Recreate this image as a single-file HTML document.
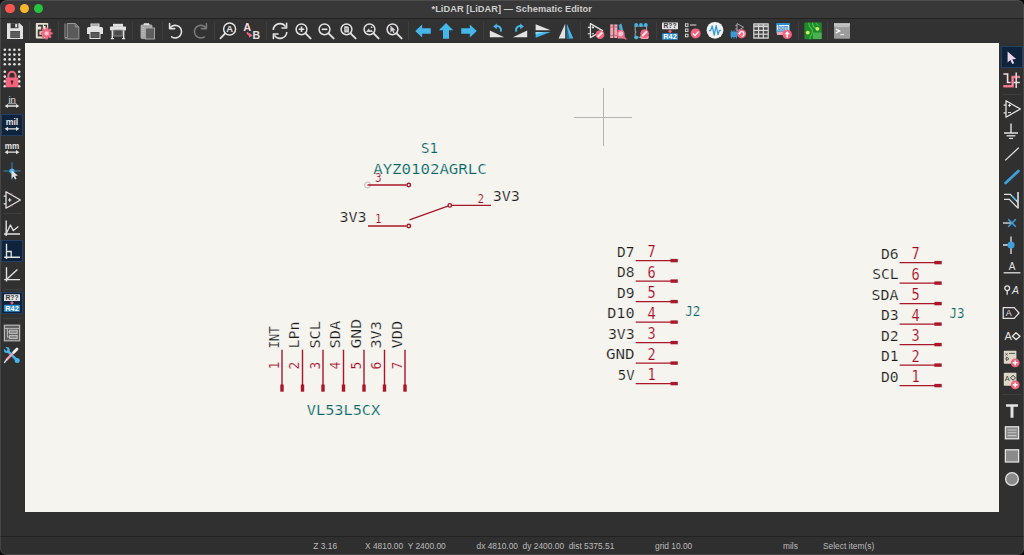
<!DOCTYPE html>
<html lang="en"><head><meta charset="utf-8"><title>*LiDAR [LiDAR] — Schematic Editor</title>
<style>
html,body{margin:0;padding:0;}
body{width:1024px;height:555px;overflow:hidden;background:#0c0c0c;position:relative;font-family:"Liberation Sans",sans-serif;}
#title{position:absolute;left:0;top:0;width:1024px;height:18px;background:#383838;}
#title .t{position:absolute;left:0;width:1023.5px;top:2.7px;text-align:center;font-size:9.25px;font-weight:bold;color:#cfcfcf;line-height:12px;letter-spacing:0.05px;white-space:nowrap}
.tl{position:absolute;top:4px;width:9.4px;height:9.4px;border-radius:50%;}
#tsep{position:absolute;left:0;top:17.8px;width:1024px;height:1.4px;background:#222;}
#tb{position:absolute;left:0;top:19px;width:1024px;height:24px;background:#323232;}
#lt{position:absolute;left:0;top:43px;width:25px;height:469px;background:#303030;}
#rt{position:absolute;left:999px;top:43px;width:25px;height:469px;background:#303030;}
#canvas{position:absolute;left:25px;top:43px;width:974px;height:469px;background:#f5f4ef;overflow:hidden}
#canvas svg{position:absolute;left:-25px;top:-43px;font-family:"DejaVu Sans Mono", "Liberation Mono", monospace;}
#below{position:absolute;left:0;top:512px;width:1024px;height:24px;background:#303030;}
#ssep{position:absolute;left:0;top:536px;width:1024px;height:1px;background:#222;}
#status{position:absolute;left:0;top:537px;width:1024px;height:18px;background:#2f2f2f;color:#bcbcbc;font-size:8.4px;line-height:10px;}
#status span{position:absolute;top:4px;white-space:pre}
.ic{position:absolute;overflow:visible}
.sel{position:absolute;width:22px;height:22px;background:#10233c;box-shadow:inset 0 0 0 1px #233f63;}
.sep{position:absolute;background:#3e3e3e;}
#win{position:absolute;left:0;top:0;width:1024px;height:555px;background:#303030;border-radius:6.5px;overflow:hidden;}
#edge{position:absolute;left:0;top:0;width:1024px;height:555px;border-radius:6.5px;box-shadow:inset 0 0 0 1px rgba(255,255,255,0.10);}
</style></head><body>
<div id="win">
<div id="title">
<div class="tl" style="left:5.3px;background:#f9564f"></div>
<div class="tl" style="left:19.5px;background:#f6b72a"></div>
<div class="tl" style="left:33.9px;background:#27c33c"></div>
<div class="t">*LiDAR [LiDAR] — Schematic Editor</div>
</div>
<div id="tsep"></div>
<div id="tb"></div>
<div id="lt"></div>
<div id="rt"></div>
<div id="canvas">
<svg width="1024" height="555" viewBox="0 0 1024 555">
<path d="M574 117.5H632M603.5 88V146" stroke="#b4b4b4" stroke-width="1" fill="none"/>
<text x="421" y="153" font-size="14.5" fill="#006464" text-anchor="start" textLength="17" lengthAdjust="spacingAndGlyphs" stroke="#f5f4ef" stroke-width="0.2">S1</text>
<text x="373.2" y="173.5" font-size="14.5" fill="#006464" text-anchor="start" textLength="113.5" lengthAdjust="spacingAndGlyphs" stroke="#f5f4ef" stroke-width="0.2">AYZ0102AGRLC</text>
<circle cx="367.5" cy="185" r="3" fill="none" stroke="#bdbdbd" stroke-width="1"/>
<path d="M367.5 185H406.5M368 226H406.5M452 205.4H491M409.5 219.8L447.8 206.2" stroke="#a8172a" stroke-width="1.4" fill="none"/>
<circle cx="408.8" cy="185" r="1.75" fill="none" stroke="#a8172a" stroke-width="1.4"/>
<circle cx="408.8" cy="226" r="1.75" fill="none" stroke="#a8172a" stroke-width="1.4"/>
<circle cx="449.8" cy="205.4" r="1.75" fill="none" stroke="#a8172a" stroke-width="1.4"/>
<text x="375" y="181.5" font-size="11.8" fill="#a4001a" text-anchor="start" textLength="6.6" lengthAdjust="spacingAndGlyphs" stroke="#f5f4ef" stroke-width="0.2">3</text>
<text x="375" y="222.8" font-size="11.8" fill="#a4001a" text-anchor="start" textLength="6.6" lengthAdjust="spacingAndGlyphs" stroke="#f5f4ef" stroke-width="0.2">1</text>
<text x="477.6" y="202.8" font-size="11.8" fill="#a4001a" text-anchor="start" textLength="6.6" lengthAdjust="spacingAndGlyphs" stroke="#f5f4ef" stroke-width="0.2">2</text>
<text x="339.6" y="222" font-size="14.5" fill="#181818" text-anchor="start" textLength="27" lengthAdjust="spacingAndGlyphs" stroke="#f5f4ef" stroke-width="0.2">3V3</text>
<text x="492.8" y="201" font-size="14.5" fill="#181818" text-anchor="start" textLength="27" lengthAdjust="spacingAndGlyphs" stroke="#f5f4ef" stroke-width="0.2">3V3</text>
<path d="M282 349.7V385" stroke="#a8172a" stroke-width="1.4"/>
<rect x="280.3" y="384.5" width="3.4" height="7.2" fill="#a8172a"/>
<text x="278.7" y="348.6" font-size="14.5" fill="#181818" text-anchor="start" textLength="22.3" lengthAdjust="spacingAndGlyphs" transform="rotate(-90 278.7 348.6)" stroke="#f5f4ef" stroke-width="0.2">INT</text>
<text x="279" y="369.6" font-size="14.5" fill="#a4001a" text-anchor="start" textLength="7.8" lengthAdjust="spacingAndGlyphs" transform="rotate(-90 279 369.6)" stroke="#f5f4ef" stroke-width="0.2">1</text>
<path d="M302.5 349.7V385" stroke="#a8172a" stroke-width="1.4"/>
<rect x="300.8" y="384.5" width="3.4" height="7.2" fill="#a8172a"/>
<text x="299.2" y="348.6" font-size="14.5" fill="#181818" text-anchor="start" textLength="27" lengthAdjust="spacingAndGlyphs" transform="rotate(-90 299.2 348.6)" stroke="#f5f4ef" stroke-width="0.2">LPn</text>
<text x="299.5" y="369.6" font-size="14.5" fill="#a4001a" text-anchor="start" textLength="7.8" lengthAdjust="spacingAndGlyphs" transform="rotate(-90 299.5 369.6)" stroke="#f5f4ef" stroke-width="0.2">2</text>
<path d="M323 349.7V385" stroke="#a8172a" stroke-width="1.4"/>
<rect x="321.3" y="384.5" width="3.4" height="7.2" fill="#a8172a"/>
<text x="319.7" y="348.6" font-size="14.5" fill="#181818" text-anchor="start" textLength="27.5" lengthAdjust="spacingAndGlyphs" transform="rotate(-90 319.7 348.6)" stroke="#f5f4ef" stroke-width="0.2">SCL</text>
<text x="320" y="369.6" font-size="14.5" fill="#a4001a" text-anchor="start" textLength="7.8" lengthAdjust="spacingAndGlyphs" transform="rotate(-90 320 369.6)" stroke="#f5f4ef" stroke-width="0.2">3</text>
<path d="M343.5 349.7V385" stroke="#a8172a" stroke-width="1.4"/>
<rect x="341.8" y="384.5" width="3.4" height="7.2" fill="#a8172a"/>
<text x="340.2" y="348.6" font-size="14.5" fill="#181818" text-anchor="start" textLength="28" lengthAdjust="spacingAndGlyphs" transform="rotate(-90 340.2 348.6)" stroke="#f5f4ef" stroke-width="0.2">SDA</text>
<text x="340.5" y="369.6" font-size="14.5" fill="#a4001a" text-anchor="start" textLength="7.8" lengthAdjust="spacingAndGlyphs" transform="rotate(-90 340.5 369.6)" stroke="#f5f4ef" stroke-width="0.2">4</text>
<path d="M364 349.7V385" stroke="#a8172a" stroke-width="1.4"/>
<rect x="362.3" y="384.5" width="3.4" height="7.2" fill="#a8172a"/>
<text x="360.7" y="348.6" font-size="14.5" fill="#181818" text-anchor="start" textLength="29.7" lengthAdjust="spacingAndGlyphs" transform="rotate(-90 360.7 348.6)" stroke="#f5f4ef" stroke-width="0.2">GND</text>
<text x="361" y="369.6" font-size="14.5" fill="#a4001a" text-anchor="start" textLength="7.8" lengthAdjust="spacingAndGlyphs" transform="rotate(-90 361 369.6)" stroke="#f5f4ef" stroke-width="0.2">5</text>
<path d="M384.5 349.7V385" stroke="#a8172a" stroke-width="1.4"/>
<rect x="382.8" y="384.5" width="3.4" height="7.2" fill="#a8172a"/>
<text x="381.2" y="348.6" font-size="14.5" fill="#181818" text-anchor="start" textLength="27.6" lengthAdjust="spacingAndGlyphs" transform="rotate(-90 381.2 348.6)" stroke="#f5f4ef" stroke-width="0.2">3V3</text>
<text x="381.5" y="369.6" font-size="14.5" fill="#a4001a" text-anchor="start" textLength="7.8" lengthAdjust="spacingAndGlyphs" transform="rotate(-90 381.5 369.6)" stroke="#f5f4ef" stroke-width="0.2">6</text>
<path d="M405 349.7V385" stroke="#a8172a" stroke-width="1.4"/>
<rect x="403.3" y="384.5" width="3.4" height="7.2" fill="#a8172a"/>
<text x="401.7" y="348.6" font-size="14.5" fill="#181818" text-anchor="start" textLength="28" lengthAdjust="spacingAndGlyphs" transform="rotate(-90 401.7 348.6)" stroke="#f5f4ef" stroke-width="0.2">VDD</text>
<text x="402" y="369.6" font-size="14.5" fill="#a4001a" text-anchor="start" textLength="7.8" lengthAdjust="spacingAndGlyphs" transform="rotate(-90 402 369.6)" stroke="#f5f4ef" stroke-width="0.2">7</text>
<text x="306.8" y="414.8" font-size="14.5" fill="#006464" text-anchor="start" textLength="73.4" lengthAdjust="spacingAndGlyphs" stroke="#f5f4ef" stroke-width="0.2">VL53L5CX</text>
<path d="M635.7 260.6H671" stroke="#a8172a" stroke-width="1.4"/>
<rect x="670.5" y="258.9" width="7.3" height="3.4" fill="#a8172a"/>
<text x="617.1" y="256.8" font-size="14.5" fill="#181818" text-anchor="start" textLength="17.5" lengthAdjust="spacingAndGlyphs" stroke="#f5f4ef" stroke-width="0.2">D7</text>
<text x="647.6" y="257.2" font-size="15.2" fill="#a4001a" text-anchor="start" textLength="8.2" lengthAdjust="spacingAndGlyphs" stroke="#f5f4ef" stroke-width="0.2">7</text>
<path d="M635.7 281.1H671" stroke="#a8172a" stroke-width="1.4"/>
<rect x="670.5" y="279.4" width="7.3" height="3.4" fill="#a8172a"/>
<text x="617.1" y="277.3" font-size="14.5" fill="#181818" text-anchor="start" textLength="17.5" lengthAdjust="spacingAndGlyphs" stroke="#f5f4ef" stroke-width="0.2">D8</text>
<text x="647.6" y="277.7" font-size="15.2" fill="#a4001a" text-anchor="start" textLength="8.2" lengthAdjust="spacingAndGlyphs" stroke="#f5f4ef" stroke-width="0.2">6</text>
<path d="M635.7 301.6H671" stroke="#a8172a" stroke-width="1.4"/>
<rect x="670.5" y="299.9" width="7.3" height="3.4" fill="#a8172a"/>
<text x="617.1" y="297.8" font-size="14.5" fill="#181818" text-anchor="start" textLength="17.5" lengthAdjust="spacingAndGlyphs" stroke="#f5f4ef" stroke-width="0.2">D9</text>
<text x="647.6" y="298.2" font-size="15.2" fill="#a4001a" text-anchor="start" textLength="8.2" lengthAdjust="spacingAndGlyphs" stroke="#f5f4ef" stroke-width="0.2">5</text>
<path d="M635.7 322.1H671" stroke="#a8172a" stroke-width="1.4"/>
<rect x="670.5" y="320.4" width="7.3" height="3.4" fill="#a8172a"/>
<text x="607.2" y="318.3" font-size="14.5" fill="#181818" text-anchor="start" textLength="27.4" lengthAdjust="spacingAndGlyphs" stroke="#f5f4ef" stroke-width="0.2">D10</text>
<text x="647.6" y="318.7" font-size="15.2" fill="#a4001a" text-anchor="start" textLength="8.2" lengthAdjust="spacingAndGlyphs" stroke="#f5f4ef" stroke-width="0.2">4</text>
<path d="M635.7 342.6H671" stroke="#a8172a" stroke-width="1.4"/>
<rect x="670.5" y="340.9" width="7.3" height="3.4" fill="#a8172a"/>
<text x="607.9" y="338.8" font-size="14.5" fill="#181818" text-anchor="start" textLength="26.7" lengthAdjust="spacingAndGlyphs" stroke="#f5f4ef" stroke-width="0.2">3V3</text>
<text x="647.6" y="339.2" font-size="15.2" fill="#a4001a" text-anchor="start" textLength="8.2" lengthAdjust="spacingAndGlyphs" stroke="#f5f4ef" stroke-width="0.2">3</text>
<path d="M635.7 363.1H671" stroke="#a8172a" stroke-width="1.4"/>
<rect x="670.5" y="361.4" width="7.3" height="3.4" fill="#a8172a"/>
<text x="605.9" y="359.3" font-size="14.5" fill="#181818" text-anchor="start" textLength="28.7" lengthAdjust="spacingAndGlyphs" stroke="#f5f4ef" stroke-width="0.2">GND</text>
<text x="647.6" y="359.7" font-size="15.2" fill="#a4001a" text-anchor="start" textLength="8.2" lengthAdjust="spacingAndGlyphs" stroke="#f5f4ef" stroke-width="0.2">2</text>
<path d="M635.7 383.6H671" stroke="#a8172a" stroke-width="1.4"/>
<rect x="670.5" y="381.9" width="7.3" height="3.4" fill="#a8172a"/>
<text x="617.8000000000001" y="379.8" font-size="14.5" fill="#181818" text-anchor="start" textLength="16.8" lengthAdjust="spacingAndGlyphs" stroke="#f5f4ef" stroke-width="0.2">5V</text>
<text x="647.6" y="380.2" font-size="15.2" fill="#a4001a" text-anchor="start" textLength="8.2" lengthAdjust="spacingAndGlyphs" stroke="#f5f4ef" stroke-width="0.2">1</text>
<text x="685.3" y="316.4" font-size="14.5" fill="#006464" text-anchor="start" textLength="15" lengthAdjust="spacingAndGlyphs" stroke="#f5f4ef" stroke-width="0.2">J2</text>
<path d="M899.6 262.6H935" stroke="#a8172a" stroke-width="1.4"/>
<rect x="934.4" y="260.9" width="7.3" height="3.4" fill="#a8172a"/>
<text x="880.9" y="258.8" font-size="14.5" fill="#181818" text-anchor="start" textLength="17.7" lengthAdjust="spacingAndGlyphs" stroke="#f5f4ef" stroke-width="0.2">D6</text>
<text x="911.6" y="259.2" font-size="15.2" fill="#a4001a" text-anchor="start" textLength="8.2" lengthAdjust="spacingAndGlyphs" stroke="#f5f4ef" stroke-width="0.2">7</text>
<path d="M899.6 283.1H935" stroke="#a8172a" stroke-width="1.4"/>
<rect x="934.4" y="281.4" width="7.3" height="3.4" fill="#a8172a"/>
<text x="872.2" y="279.3" font-size="14.5" fill="#181818" text-anchor="start" textLength="26.4" lengthAdjust="spacingAndGlyphs" stroke="#f5f4ef" stroke-width="0.2">SCL</text>
<text x="911.6" y="279.7" font-size="15.2" fill="#a4001a" text-anchor="start" textLength="8.2" lengthAdjust="spacingAndGlyphs" stroke="#f5f4ef" stroke-width="0.2">6</text>
<path d="M899.6 303.6H935" stroke="#a8172a" stroke-width="1.4"/>
<rect x="934.4" y="301.9" width="7.3" height="3.4" fill="#a8172a"/>
<text x="871.6" y="299.8" font-size="14.5" fill="#181818" text-anchor="start" textLength="27" lengthAdjust="spacingAndGlyphs" stroke="#f5f4ef" stroke-width="0.2">SDA</text>
<text x="911.6" y="300.2" font-size="15.2" fill="#a4001a" text-anchor="start" textLength="8.2" lengthAdjust="spacingAndGlyphs" stroke="#f5f4ef" stroke-width="0.2">5</text>
<path d="M899.6 324.1H935" stroke="#a8172a" stroke-width="1.4"/>
<rect x="934.4" y="322.4" width="7.3" height="3.4" fill="#a8172a"/>
<text x="880.9" y="320.3" font-size="14.5" fill="#181818" text-anchor="start" textLength="17.7" lengthAdjust="spacingAndGlyphs" stroke="#f5f4ef" stroke-width="0.2">D3</text>
<text x="911.6" y="320.7" font-size="15.2" fill="#a4001a" text-anchor="start" textLength="8.2" lengthAdjust="spacingAndGlyphs" stroke="#f5f4ef" stroke-width="0.2">4</text>
<path d="M899.6 344.6H935" stroke="#a8172a" stroke-width="1.4"/>
<rect x="934.4" y="342.9" width="7.3" height="3.4" fill="#a8172a"/>
<text x="880.9" y="340.8" font-size="14.5" fill="#181818" text-anchor="start" textLength="17.7" lengthAdjust="spacingAndGlyphs" stroke="#f5f4ef" stroke-width="0.2">D2</text>
<text x="911.6" y="341.2" font-size="15.2" fill="#a4001a" text-anchor="start" textLength="8.2" lengthAdjust="spacingAndGlyphs" stroke="#f5f4ef" stroke-width="0.2">3</text>
<path d="M899.6 365.1H935" stroke="#a8172a" stroke-width="1.4"/>
<rect x="934.4" y="363.4" width="7.3" height="3.4" fill="#a8172a"/>
<text x="880.9" y="361.3" font-size="14.5" fill="#181818" text-anchor="start" textLength="17.7" lengthAdjust="spacingAndGlyphs" stroke="#f5f4ef" stroke-width="0.2">D1</text>
<text x="911.6" y="361.7" font-size="15.2" fill="#a4001a" text-anchor="start" textLength="8.2" lengthAdjust="spacingAndGlyphs" stroke="#f5f4ef" stroke-width="0.2">2</text>
<path d="M899.6 385.6H935" stroke="#a8172a" stroke-width="1.4"/>
<rect x="934.4" y="383.9" width="7.3" height="3.4" fill="#a8172a"/>
<text x="880.9" y="381.8" font-size="14.5" fill="#181818" text-anchor="start" textLength="17.7" lengthAdjust="spacingAndGlyphs" stroke="#f5f4ef" stroke-width="0.2">D0</text>
<text x="911.6" y="382.2" font-size="15.2" fill="#a4001a" text-anchor="start" textLength="8.2" lengthAdjust="spacingAndGlyphs" stroke="#f5f4ef" stroke-width="0.2">1</text>
<text x="949.5" y="318.4" font-size="14.5" fill="#006464" text-anchor="start" textLength="15" lengthAdjust="spacingAndGlyphs" stroke="#f5f4ef" stroke-width="0.2">J3</text>
</svg>
</div>
<div id="below"></div>
<div id="ssep"></div>
<div id="status">
<span style="left:313.3px">Z 3.16</span>
<span style="left:365px">X 4810.00  Y 2400.00</span>
<span style="left:476.5px">dx 4810.00  dy 2400.00  dist 5375.51</span>
<span style="left:655px">grid 10.00</span>
<span style="left:783px">mils</span>
<span style="left:823px">Select item(s)</span>
</div>
<div id="icons">
<div class="sep" style="left:28.5px;top:22px;width:1px;height:18px"></div><div class="sep" style="left:58.0px;top:22px;width:1px;height:18px"></div><div class="sep" style="left:132.3px;top:22px;width:1px;height:18px"></div><div class="sep" style="left:162.1px;top:22px;width:1px;height:18px"></div><div class="sep" style="left:213.7px;top:22px;width:1px;height:18px"></div><div class="sep" style="left:265.5px;top:22px;width:1px;height:18px"></div><div class="sep" style="left:408.3px;top:22px;width:1px;height:18px"></div><div class="sep" style="left:483.0px;top:22px;width:1px;height:18px"></div><div class="sep" style="left:579.7px;top:22px;width:1px;height:18px"></div><div class="sep" style="left:655.5px;top:22px;width:1px;height:18px"></div><div class="sep" style="left:797.5px;top:22px;width:1px;height:18px"></div><div class="sep" style="left:826.9px;top:22px;width:1px;height:18px"></div><div class="sep" style="left:3px;top:213.3px;width:19px;height:1px"></div><div class="sep" style="left:3px;top:288.5px;width:19px;height:1px"></div><div class="sep" style="left:3px;top:318.3px;width:19px;height:1px"></div><div class="sep" style="left:1002px;top:93.5px;width:19px;height:1px"></div><div class="sep" style="left:1002px;top:394.3px;width:19px;height:1px"></div>
<svg class="ic" style="left:5.5px;top:22px" width="18" height="18" viewBox="0 0 18 18"><path d="M1 1.2H13.6L17 4.6V17H1Z" fill="#e2e2e2"/><rect x="4.6" y="1.2" width="7.8" height="5" fill="#3a3a3a"/><rect x="9.2" y="2" width="2" height="3.3" fill="#e2e2e2"/><rect x="4.2" y="9" width="9.8" height="7" fill="#505050"/><path d="M4.2 10.8H14M4.2 12.6H14M4.2 14.4H14" stroke="#777" stroke-width="0.6"/></svg>
<svg class="ic" style="left:34.8px;top:22px" width="18" height="18" viewBox="0 0 18 18"><rect x="0.8" y="1" width="12.4" height="15.4" rx="0.8" fill="#e4e0d0"/><path d="M3 3.6H7V8.4H3.6V13.6H7.4" stroke="#3a3a3a" stroke-width="1.7" fill="none"/><path d="M9 3.4H11.4V6" stroke="#3a3a3a" stroke-width="1.4" fill="none"/><rect x="-1.15" y="-6" width="2.3" height="3" fill="#f2647e" transform="translate(11.6 11.4) rotate(0)"/><rect x="-1.15" y="-6" width="2.3" height="3" fill="#f2647e" transform="translate(11.6 11.4) rotate(45)"/><rect x="-1.15" y="-6" width="2.3" height="3" fill="#f2647e" transform="translate(11.6 11.4) rotate(90)"/><rect x="-1.15" y="-6" width="2.3" height="3" fill="#f2647e" transform="translate(11.6 11.4) rotate(135)"/><rect x="-1.15" y="-6" width="2.3" height="3" fill="#f2647e" transform="translate(11.6 11.4) rotate(180)"/><rect x="-1.15" y="-6" width="2.3" height="3" fill="#f2647e" transform="translate(11.6 11.4) rotate(225)"/><rect x="-1.15" y="-6" width="2.3" height="3" fill="#f2647e" transform="translate(11.6 11.4) rotate(270)"/><rect x="-1.15" y="-6" width="2.3" height="3" fill="#f2647e" transform="translate(11.6 11.4) rotate(315)"/><circle cx="11.6" cy="11.4" r="4.3" fill="#f2647e"/><circle cx="11.6" cy="11.4" r="2.2" fill="#f9c3ce"/></svg>
<svg class="ic" style="left:63px;top:22px" width="18" height="18" viewBox="0 0 18 18"><path d="M2 1.5V15.5H4" fill="none" stroke="#9a9a9a" stroke-width="1"/><path d="M4.2 1.5H12.3L15.8 5V17H4.2Z" fill="#5a5a5a" stroke="#9a9a9a" stroke-width="1"/><path d="M12.3 1.5V5H15.8" fill="#777" stroke="#9a9a9a" stroke-width="0.8"/><path d="M2 15.5V17H4" stroke="#9a9a9a" stroke-width="0.8" fill="none"/></svg>
<svg class="ic" style="left:86.3px;top:22px" width="18" height="18" viewBox="0 0 18 18"><path d="M4.5 1.5H13.5V5H4.5Z" fill="#e2e2e2"/><path d="M2.5 5H15.5Q17 5 17 6.5V12H1V6.5Q1 5 2.5 5Z" fill="#e2e2e2"/><rect x="4" y="9.5" width="10" height="7" fill="#4a4a4a" stroke="#e2e2e2" stroke-width="1"/><path d="M5.5 12H12.5M5.5 14H12.5" stroke="#777" stroke-width="0.7"/><rect x="5.5" y="2.5" width="7" height="1.2" fill="#888"/></svg>
<svg class="ic" style="left:109.3px;top:22px" width="18" height="18" viewBox="0 0 18 18"><rect x="4" y="1.8" width="10" height="3" fill="#e2e2e2"/><rect x="1" y="4.5" width="16" height="4" rx="0.8" fill="#e2e2e2"/><rect x="4.8" y="8" width="8.4" height="6" fill="#4a4a4a" stroke="#9a9a9a" stroke-width="0.8"/><path d="M3.3 8.5V16.5M14.7 8.5V16.5M1.8 16.6H5M13 16.6H16.2" stroke="#e2e2e2" stroke-width="1.4"/></svg>
<svg class="ic" style="left:139.3px;top:22px" width="18" height="18" viewBox="0 0 18 18"><rect x="2" y="3" width="11" height="13.6" rx="0.8" fill="#a4a4a4" stroke="#b8b8b8" stroke-width="0.8"/><path d="M5 3V1.8H10V3" fill="#e2e2e2" stroke="#e2e2e2" stroke-width="1"/><rect x="6.4" y="6" width="9.2" height="11" fill="#5e5e5e" stroke="#b0b0b0" stroke-width="0.9"/><path d="M3 5.5H5.5M3 7.5H5.5M3 9.5H5.5M3 11.5H5.5M3 13.5H5.5" stroke="#c8c8c8" stroke-width="0.6"/></svg>
<svg class="ic" style="left:166.8px;top:22px" width="18" height="18" viewBox="0 0 18 18"><path d="M3.4 5.6A6.3 6.3 0 1 1 4.6 14.8" fill="none" stroke="#e2e2e2" stroke-width="1.6" stroke-linecap="round"/><path d="M2.6 1.5V6.6H7.7" fill="none" stroke="#e2e2e2" stroke-width="1.6" stroke-linecap="round" stroke-linejoin="round"/></svg>
<svg class="ic" style="left:191px;top:22px" width="18" height="18" viewBox="0 0 18 18"><path d="M14.6 5.6A6.3 6.3 0 1 0 13.4 14.8" fill="none" stroke="#7a7a7a" stroke-width="1.6" stroke-linecap="round"/><path d="M15.4 1.5V6.6H10.3" fill="none" stroke="#7a7a7a" stroke-width="1.6" stroke-linecap="round" stroke-linejoin="round"/></svg>
<svg class="ic" style="left:219px;top:22px" width="18" height="18" viewBox="0 0 18 18"><circle cx="10.6" cy="7" r="6" fill="none" stroke="#e2e2e2" stroke-width="1.5"/><path d="M6.2 11.4L1.6 16.2" stroke="#e2e2e2" stroke-width="1.9" stroke-linecap="round"/><text x="10.6" y="10.4" font-size="9.4" font-weight="bold" fill="#e2e2e2" text-anchor="middle" font-family="Liberation Sans,sans-serif">A</text></svg>
<svg class="ic" style="left:242.6px;top:22px" width="18" height="18" viewBox="0 0 18 18"><text x="4.3" y="9.3" font-size="11" font-weight="bold" fill="#f0d8de" text-anchor="middle" font-family="Liberation Sans,sans-serif">A</text><text x="13.2" y="17" font-size="10.5" font-weight="bold" fill="#e2e2e2" text-anchor="middle" font-family="Liberation Sans,sans-serif">B</text><path d="M4.2 10.2Q4.6 13.2 7.8 13.4" stroke="#f2647e" stroke-width="1.6" fill="none"/><path d="M6.2 10.8L9.6 13.6L6 15.8Z" fill="#f2647e"/></svg>
<svg class="ic" style="left:271px;top:22px" width="18" height="18" viewBox="0 0 18 18"><path d="M2.2 8A6.8 6.8 0 0 1 14.6 4.6" fill="none" stroke="#e2e2e2" stroke-width="1.6"/><path d="M15.8 10A6.8 6.8 0 0 1 3.4 13.4" fill="none" stroke="#e2e2e2" stroke-width="1.6"/><path d="M15.6 1.4V6H11" fill="none" stroke="#e2e2e2" stroke-width="1.6" stroke-linejoin="round" stroke-linecap="round"/><path d="M2.4 16.6V12H7" fill="none" stroke="#e2e2e2" stroke-width="1.6" stroke-linejoin="round" stroke-linecap="round"/></svg>
<svg class="ic" style="left:293.8px;top:22px" width="18" height="18" viewBox="0 0 18 18"><circle cx="7.5" cy="7.3" r="5.4" fill="none" stroke="#e2e2e2" stroke-width="1.5"/><path d="M11.6 11.4L16.6 16.4" stroke="#e2e2e2" stroke-width="1.9" stroke-linecap="round"/><path d="M4.7 7.3H10.3M7.5 4.5V10.1" stroke="#e2e2e2" stroke-width="1.6"/></svg>
<svg class="ic" style="left:316.6px;top:22px" width="18" height="18" viewBox="0 0 18 18"><circle cx="7.5" cy="7.3" r="5.4" fill="none" stroke="#e2e2e2" stroke-width="1.5"/><path d="M11.6 11.4L16.6 16.4" stroke="#e2e2e2" stroke-width="1.9" stroke-linecap="round"/><path d="M4.7 7.3H10.3" stroke="#e2e2e2" stroke-width="1.6"/></svg>
<svg class="ic" style="left:339.4px;top:22px" width="18" height="18" viewBox="0 0 18 18"><circle cx="7.5" cy="7.3" r="5.4" fill="none" stroke="#e2e2e2" stroke-width="1.5"/><path d="M11.6 11.4L16.6 16.4" stroke="#e2e2e2" stroke-width="1.9" stroke-linecap="round"/><path d="M5.2 4.2H8.6L10 5.6V10.4H5.2Z" fill="#d0d0d0"/><path d="M6 6.5H9M6 8H9" stroke="#777" stroke-width="0.6"/></svg>
<svg class="ic" style="left:362px;top:22px" width="18" height="18" viewBox="0 0 18 18"><circle cx="7.5" cy="7.3" r="5.4" fill="none" stroke="#e2e2e2" stroke-width="1.5"/><path d="M11.6 11.4L16.6 16.4" stroke="#e2e2e2" stroke-width="1.9" stroke-linecap="round"/><path d="M4 10L6.6 6.4L8.2 8.4L9.2 7.4L11 10Z" fill="#d0d0d0"/><circle cx="9.6" cy="5.2" r="0.9" fill="#d0d0d0"/></svg>
<svg class="ic" style="left:385px;top:22px" width="18" height="18" viewBox="0 0 18 18"><circle cx="7.5" cy="7.3" r="5.4" fill="none" stroke="#e2e2e2" stroke-width="1.5"/><path d="M11.6 11.4L16.6 16.4" stroke="#e2e2e2" stroke-width="1.9" stroke-linecap="round"/><path d="M5.4 3.6L5.4 10.4L7.2 8.8L8.4 11.2L9.6 10.6L8.4 8.4L10.6 8.2Z" fill="#d8d0d8"/></svg>
<svg class="ic" style="left:414.4px;top:22px" width="18" height="18" viewBox="0 0 18 18"><path d="M1.2 9L8.2 2.6V6.2H16.8V11.8H8.2V15.4Z" fill="#44b6ea"/></svg>
<svg class="ic" style="left:437px;top:22px" width="18" height="18" viewBox="0 0 18 18"><path d="M9 1L16.2 8.2H12V16.8H6V8.2H1.8Z" fill="#44b6ea"/></svg>
<svg class="ic" style="left:459.6px;top:22px" width="18" height="18" viewBox="0 0 18 18"><path d="M16.8 9L9.8 2.6V6.2H1.2V11.8H9.8V15.4Z" fill="#44b6ea"/></svg>
<svg class="ic" style="left:488.2px;top:22px" width="18" height="18" viewBox="0 0 18 18"><path d="M1.8 8.4V15.2H16.2Z" fill="#e2e2e2"/><path d="M12.6 9.6A4 4 0 0 0 7.6 4.2" fill="none" stroke="#44b6ea" stroke-width="1.9"/><path d="M5.2 4.6L8.8 1.6V7.2Z" fill="#44b6ea"/></svg>
<svg class="ic" style="left:511.29999999999995px;top:22px" width="18" height="18" viewBox="0 0 18 18"><path d="M16.2 8.4V15.2H1.8Z" fill="#e2e2e2"/><path d="M5.4 9.6A4 4 0 0 1 10.4 4.2" fill="none" stroke="#44b6ea" stroke-width="1.9"/><path d="M12.8 4.6L9.2 1.6V7.2Z" fill="#44b6ea"/></svg>
<svg class="ic" style="left:534px;top:22px" width="18" height="18" viewBox="0 0 18 18"><path d="M1.6 2.2L16.6 8.3H1.6Z" fill="#e2e2e2"/><path d="M1.6 15.8L16.6 9.9H1.6Z" fill="#44b6ea"/><path d="M1.6 12.2L10 9.9H1.6Z" fill="#9ad8f4"/></svg>
<svg class="ic" style="left:557.4px;top:22px" width="18" height="18" viewBox="0 0 18 18"><path d="M1.6 16.4L8.2 1.8V16.4Z" fill="#e2e2e2"/><path d="M16.4 16.4L9.8 1.8V16.4Z" fill="#44b6ea"/><path d="M12.6 16.4L9.8 4V16.4Z" fill="#2a6a94"/></svg>
<svg class="ic" style="left:586.6px;top:22px" width="18" height="18" viewBox="0 0 18 18"><path d="M3.4 1.6V15.6L15.6 8.6Z" fill="none" stroke="#e2e2e2" stroke-width="1.3" stroke-linejoin="round"/><path d="M0.8 5.4H3.4M0.8 11.8H3.4M4.8 5.4H7M5.9 4.3V6.5M4.8 11.8H7" stroke="#e2e2e2" stroke-width="1.1"/><circle cx="13" cy="12.6" r="4.4" fill="#f2647e"/><path d="M10.6 15.0L15.4 10.2" stroke="#fbe3e8" stroke-width="2.2"/></svg>
<svg class="ic" style="left:609px;top:22px" width="18" height="18" viewBox="0 0 18 18"><rect x="1.2" y="2.4" width="3.2" height="13.6" fill="#f1a5b3"/><rect x="5.2" y="2.4" width="3.2" height="13.6" fill="#f1a5b3"/><path d="M1.2 5H4.4M5.2 5H8.4M1.2 13.4H4.4M5.2 13.4H8.4" stroke="#b8586c" stroke-width="0.8"/><path d="M9.6 3L12.4 1.6L16 15L12.6 16.2Z" fill="#4aa6d6"/><path d="M9.2 7L16.6 16.4L8.8 16.4Z" fill="#f08a9e"/><circle cx="11.8" cy="11.8" r="3.2" fill="#f6c6d0" stroke="#f2647e" stroke-width="1.3"/><path d="M14 14.2L16.8 17" stroke="#f2647e" stroke-width="1.6" stroke-linecap="round"/></svg>
<svg class="ic" style="left:631.7px;top:22px" width="18" height="18" viewBox="0 0 18 18"><path d="M3.2 4V9.2Q4.8 10 3.2 11V15.2H14.6V4Z" fill="none" stroke="#9a9a9a" stroke-width="1.1"/><circle cx="4.2" cy="3" r="1.9" fill="#44b6ea"/><circle cx="9" cy="3" r="1.9" fill="#44b6ea"/><circle cx="13.8" cy="3" r="1.9" fill="#44b6ea"/><circle cx="4.2" cy="15.4" r="1.9" fill="#44b6ea"/><rect x="8.2" y="13" width="8.6" height="4" rx="1.8" fill="#f4a4b4"/><circle cx="12.6" cy="11.6" r="4.3" fill="#f2647e"/><path d="M10.2 14.0L15.0 9.2" stroke="#fbe3e8" stroke-width="2.2"/></svg>
<svg class="ic" style="left:660.7px;top:22px" width="18" height="18" viewBox="0 0 18 18"><rect x="1" y="0.6" width="16" height="6.6" rx="0.6" fill="#e2e2e2"/><text x="9" y="6.3" font-size="6.6" font-weight="bold" fill="#3a3a3a" text-anchor="middle" font-family="Liberation Sans,sans-serif" textLength="13" lengthAdjust="spacingAndGlyphs">R??</text><path d="M9 7.4V10.6" stroke="#f2647e" stroke-width="1.4"/><path d="M6.6 8.8L9 11.2L11.4 8.8Z" fill="#f2647e"/><rect x="1" y="11.2" width="16" height="6.6" rx="0.6" fill="#2f8ccc"/><text x="9" y="17" font-size="6.8" font-weight="bold" fill="#ffffff" text-anchor="middle" font-family="Liberation Sans,sans-serif" textLength="13.4" lengthAdjust="spacingAndGlyphs">R42</text></svg>
<svg class="ic" style="left:684px;top:22px" width="18" height="18" viewBox="0 0 18 18"><rect x="1.4" y="1.8" width="2.6" height="2.6" fill="none" stroke="#e2e2e2" stroke-width="0.9"/><rect x="1.4" y="7" width="2.6" height="2.6" fill="none" stroke="#e2e2e2" stroke-width="0.9"/><rect x="1.4" y="12.2" width="2.6" height="2.6" fill="none" stroke="#e2e2e2" stroke-width="0.9"/><path d="M6 3H12.4" stroke="#e2e2e2" stroke-width="1"/><circle cx="11.6" cy="11.4" r="5" fill="#f2647e"/><path d="M8.8 11.4L11 13.6L14.6 9.6" stroke="#fff" stroke-width="1.4" fill="none"/></svg>
<svg class="ic" style="left:706.3px;top:21.9px" width="18" height="18" viewBox="0 0 18 18"><circle cx="9" cy="8.3" r="8.4" fill="#f2f2f2"/><path d="M2.8 8.6L4.6 8.6L6.2 4L8.2 13L10.2 3.6L12 12.6L13.4 8.4L15.2 8.4" fill="none" stroke="#3a9ad6" stroke-width="1.3" stroke-linejoin="round"/></svg>
<svg class="ic" style="left:729px;top:22px" width="18" height="18" viewBox="0 0 18 18"><path d="M8 1.6V9L14.6 5.3Z" fill="none" stroke="#aaa" stroke-width="1"/><path d="M6.2 3.6H8M6.2 7H8" stroke="#aaa" stroke-width="0.9"/><rect x="1.6" y="9.6" width="6.8" height="5.4" rx="0.8" fill="#3a9ad6"/><path d="M2.6 8.4V9.6M5 8.4V9.6M7.4 8.4V9.6M2.6 15V16.4M5 15V16.4M7.4 15V16.4" stroke="#3a9ad6" stroke-width="1"/><circle cx="12.6" cy="11.8" r="4.6" fill="#f2647e"/><path d="M10.4 11.8A2.3 2.3 0 1 1 12.6 14.2" stroke="#fff" stroke-width="1.1" fill="none"/><path d="M9 11L10.4 13L12 11Z" fill="#fff"/></svg>
<svg class="ic" style="left:752px;top:22px" width="18" height="18" viewBox="0 0 18 18"><rect x="1.2" y="1.2" width="15.6" height="15.6" rx="0.6" fill="#d6d6d6"/><g fill="#4a4a4a"><rect x="2.4" y="5.2" width="3.6" height="2.6"/><rect x="7.2" y="5.2" width="3.6" height="2.6"/><rect x="12" y="5.2" width="3.6" height="2.6"/><rect x="2.4" y="9" width="3.6" height="2.6"/><rect x="7.2" y="9" width="3.6" height="2.6"/><rect x="12" y="9" width="3.6" height="2.6"/><rect x="2.4" y="12.8" width="3.6" height="2.6"/><rect x="7.2" y="12.8" width="3.6" height="2.6"/><rect x="12" y="12.8" width="3.6" height="2.6"/></g><g fill="#9a9a9a"><rect x="2.4" y="2.2" width="3.6" height="1.8"/><rect x="7.2" y="2.2" width="3.6" height="1.8"/><rect x="12" y="2.2" width="3.6" height="1.8"/></g></svg>
<svg class="ic" style="left:775px;top:22px" width="18" height="18" viewBox="0 0 18 18"><rect x="1" y="1" width="14" height="10.6" rx="1" fill="#2f8ccc"/><rect x="2" y="3" width="12" height="5.4" fill="#eef4f8"/><text x="8" y="7.7" font-size="6.6" font-weight="bold" fill="#2f7fc0" text-anchor="middle" font-family="Liberation Sans,sans-serif" textLength="10.6" lengthAdjust="spacingAndGlyphs">bom</text><rect x="2" y="9.6" width="8" height="3.4" fill="#f4a4b4"/><circle cx="12.2" cy="12.4" r="4.7" fill="#f2647e"/><path d="M12.2 15.4V10.6" stroke="#fff" stroke-width="1.5"/><path d="M9.6 12.2L12.2 9.2L14.8 12.2Z" fill="#fff"/></svg>
<svg class="ic" style="left:804px;top:21.6px" width="18" height="18" viewBox="0 0 18 18"><rect x="0.4" y="0.6" width="17.4" height="16.6" rx="1" fill="#1f8a2c"/><path d="M9 17V10.6H17.6V17Z" fill="#4cb050"/><path d="M4.6 0.6Q4.8 4.6 7.6 7Q9.6 9.2 7.4 12.6Q5.8 14.4 5.8 17.2" fill="none" stroke="#45c04a" stroke-width="1.2"/><path d="M8.4 0.6Q8.6 4.4 12 6.6" fill="none" stroke="#45c04a" stroke-width="1.2"/><path d="M12 0.6Q12.4 3 14.6 3.4" fill="none" stroke="#45c04a" stroke-width="1"/><circle cx="3.8" cy="10.6" r="1.9" fill="#d8f060"/><circle cx="13.4" cy="6.8" r="1.9" fill="#d8f060"/></svg>
<svg class="ic" style="left:833px;top:22px" width="18" height="18" viewBox="0 0 18 18"><rect x="1" y="1.2" width="16" height="15.6" rx="0.8" fill="#9c9c9c"/><rect x="1" y="1.2" width="16" height="2.6" fill="#c4c4c4"/><path d="M2 4.6H16" stroke="#d8d8d8" stroke-width="0.7"/><path d="M2.8 7.2L6.6 9L2.8 10.8" fill="none" stroke="#fff" stroke-width="1.3"/><path d="M7.2 12.6H11" stroke="#e8e8e8" stroke-width="1.1"/></svg>
<svg class="ic" style="left:3.3000000000000007px;top:48px" width="18" height="18" viewBox="0 0 18 18"><circle cx="1.8" cy="1.8" r="1.3" fill="#e2e2e2"/><circle cx="1.8" cy="6.6" r="1.3" fill="#e2e2e2"/><circle cx="1.8" cy="11.4" r="1.3" fill="#e2e2e2"/><circle cx="1.8" cy="16.2" r="1.3" fill="#e2e2e2"/><circle cx="6.6" cy="1.8" r="1.3" fill="#e2e2e2"/><circle cx="6.6" cy="6.6" r="1.3" fill="#e2e2e2"/><circle cx="6.6" cy="11.4" r="1.3" fill="#e2e2e2"/><circle cx="6.6" cy="16.2" r="1.3" fill="#e2e2e2"/><circle cx="11.4" cy="1.8" r="1.3" fill="#e2e2e2"/><circle cx="11.4" cy="6.6" r="1.3" fill="#e2e2e2"/><circle cx="11.4" cy="11.4" r="1.3" fill="#e2e2e2"/><circle cx="11.4" cy="16.2" r="1.3" fill="#e2e2e2"/><circle cx="16.2" cy="1.8" r="1.3" fill="#e2e2e2"/><circle cx="16.2" cy="6.6" r="1.3" fill="#e2e2e2"/><circle cx="16.2" cy="11.4" r="1.3" fill="#e2e2e2"/><circle cx="16.2" cy="16.2" r="1.3" fill="#e2e2e2"/></svg>
<svg class="ic" style="left:3.3000000000000007px;top:70.3px" width="18" height="18" viewBox="0 0 18 18"><circle cx="1.8" cy="1.8" r="1.3" fill="#e2e2e2"/><circle cx="1.8" cy="6.6" r="1.3" fill="#e2e2e2"/><circle cx="1.8" cy="11.4" r="1.3" fill="#e2e2e2"/><circle cx="1.8" cy="16.2" r="1.3" fill="#e2e2e2"/><circle cx="16.2" cy="1.8" r="1.3" fill="#e2e2e2"/><circle cx="16.2" cy="6.6" r="1.3" fill="#e2e2e2"/><circle cx="16.2" cy="11.4" r="1.3" fill="#e2e2e2"/><circle cx="16.2" cy="16.2" r="1.3" fill="#e2e2e2"/><path d="M5.4 8V5.4A3.6 3.6 0 0 1 12.6 5.4V8" fill="none" stroke="#f2647e" stroke-width="2"/><rect x="2.6" y="7.6" width="12.8" height="9.6" rx="1" fill="#f2647e"/><circle cx="9" cy="11.6" r="1.3" fill="#5a2030"/><path d="M9 12V14.6" stroke="#5a2030" stroke-width="1.3"/></svg>
<svg class="ic" style="left:3.3000000000000007px;top:93px" width="18" height="18" viewBox="0 0 18 18"><text x="9.2" y="9.7" font-size="8.4" fill="#e2e2e2" text-anchor="middle" font-family="Liberation Sans,sans-serif" textLength="7.4" lengthAdjust="spacingAndGlyphs">in</text><path d="M5 10.7H13.4" stroke="#e2e2e2" stroke-width="0.7"/><path d="M4 13H14" stroke="#e2e2e2" stroke-width="1.3"/><path d="M1.6 13L5 10.9V15.1ZM16.4 13L13 10.9V15.1Z" fill="#e2e2e2"/></svg>
<div class="sel" style="left:1.3000000000000007px;top:114px"></div>
<svg class="ic" style="left:3.3000000000000007px;top:116px" width="18" height="18" viewBox="0 0 18 18"><text x="9" y="9.4" font-size="8.4" font-weight="bold" fill="#e2e2e2" text-anchor="middle" font-family="Liberation Sans,sans-serif" textLength="12.6" lengthAdjust="spacingAndGlyphs">mil</text><path d="M4 12.8H14" stroke="#e2e2e2" stroke-width="1.3"/><path d="M1.6 12.8L5 10.700000000000001V14.9ZM16.4 12.8L13 10.700000000000001V14.9Z" fill="#e2e2e2"/></svg>
<svg class="ic" style="left:3.3000000000000007px;top:139.6px" width="18" height="18" viewBox="0 0 18 18"><text x="9" y="9.2" font-size="8.4" font-weight="bold" fill="#e2e2e2" text-anchor="middle" font-family="Liberation Sans,sans-serif" textLength="14.6" lengthAdjust="spacingAndGlyphs">mm</text><path d="M4 12.2H14" stroke="#e2e2e2" stroke-width="1.3"/><path d="M1.6 12.2L5 10.1V14.299999999999999ZM16.4 12.2L13 10.1V14.299999999999999Z" fill="#e2e2e2"/></svg>
<svg class="ic" style="left:3.3000000000000007px;top:162.2px" width="18" height="18" viewBox="0 0 18 18"><path d="M9 0.4V17.6M0.4 9H17.6" stroke="#3f8fc8" stroke-width="0.9"/><circle cx="9" cy="9" r="2.6" fill="#44b6ea"/><path d="M8.6 8.6L8.6 16.6L10.6 14.6L12 17.6L13.6 16.8L12.2 14L15 13.6Z" fill="#e0e0e0"/></svg>
<svg class="ic" style="left:3.4000000000000004px;top:190.8px" width="18" height="18" viewBox="0 0 18 18"><path d="M3 0.8V17.2L17.4 9Z" fill="none" stroke="#e2e2e2" stroke-width="1.3" stroke-linejoin="round"/><path d="M0.6 5.2H3M0.6 12.8H3" stroke="#e2e2e2" stroke-width="1.2"/><path d="M5 9H8.4M6.7 7.3V10.7" stroke="#e2e2e2" stroke-width="1.1"/><path d="M9 2.2V4.6M9 13.6V16" stroke="#f2647e" stroke-width="1" stroke-dasharray="1 0.8"/></svg>
<svg class="ic" style="left:3.3000000000000007px;top:219.3px" width="18" height="18" viewBox="0 0 18 18"><path d="M3.2 1.6V17M1 15H17" stroke="#e2e2e2" stroke-width="1.4" fill="none"/><path d="M3.6 14L7.4 6L10.4 11.6L15.4 7.6" stroke="#e2e2e2" stroke-width="1.3" fill="none" stroke-linejoin="round"/></svg>
<div class="sel" style="left:1.3000000000000007px;top:239.6px"></div>
<svg class="ic" style="left:3.3000000000000007px;top:241.6px" width="18" height="18" viewBox="0 0 18 18"><path d="M3.5 1.8V17M1.2 15.3H17" stroke="#e2e2e2" stroke-width="1.4" fill="none"/><path d="M3.5 9.5H8.2V15.3" stroke="#e2e2e2" stroke-width="1.3" fill="none"/></svg>
<svg class="ic" style="left:3.3000000000000007px;top:265.2px" width="18" height="18" viewBox="0 0 18 18"><path d="M3.5 2.2V16.6M1.2 14.6H17" stroke="#e2e2e2" stroke-width="1.4" fill="none"/><path d="M3.5 14.6L14.4 4.4" stroke="#e2e2e2" stroke-width="1.4"/></svg>
<div class="sel" style="left:1.3000000000000007px;top:292.2px"></div>
<svg class="ic" style="left:3.3000000000000007px;top:294.2px" width="18" height="18" viewBox="0 0 18 18"><rect x="1" y="0.2" width="16" height="6.8" rx="0.6" fill="#e2e2e2"/><text x="9" y="6" font-size="6.6" font-weight="bold" fill="#3a3a3a" text-anchor="middle" font-family="Liberation Sans,sans-serif" textLength="13" lengthAdjust="spacingAndGlyphs">R??</text><path d="M9 7.2V10" stroke="#f2647e" stroke-width="1.4"/><path d="M6.8 8.6L9 10.8L11.2 8.6Z" fill="#f2647e"/><rect x="1" y="10.8" width="16" height="7" rx="0.6" fill="#2f8ccc"/><text x="9" y="16.8" font-size="6.8" font-weight="bold" fill="#ffffff" text-anchor="middle" font-family="Liberation Sans,sans-serif" textLength="13.4" lengthAdjust="spacingAndGlyphs">R42</text></svg>
<svg class="ic" style="left:3.3000000000000007px;top:323.8px" width="18" height="18" viewBox="0 0 18 18"><rect x="1.4" y="1.2" width="15.2" height="15.6" fill="#5c5c5c" stroke="#b8b8b8" stroke-width="1.2"/><path d="M1.4 4.4H16.6" stroke="#b8b8b8" stroke-width="1"/><path d="M4.4 4.4V13.4" stroke="#b8b8b8" stroke-width="1"/><rect x="6.6" y="6.2" width="7.6" height="3.2" fill="#8a8a8a" stroke="#c8c8c8" stroke-width="0.9"/><rect x="6.6" y="11.4" width="7.6" height="3.2" fill="#8a8a8a" stroke="#c8c8c8" stroke-width="0.9"/><path d="M4.4 7.8H6.6M4.4 13H6.6" stroke="#b8b8b8" stroke-width="0.9"/></svg>
<svg class="ic" style="left:3.3000000000000007px;top:346.2px" width="18" height="18" viewBox="0 0 18 18"><path d="M3.6 3.8L14.4 14.6" stroke="#44b6ea" stroke-width="2.6" stroke-linecap="round"/><circle cx="3.8" cy="4" r="2.9" fill="#44b6ea"/><path d="M0.6 0.8L4 4.2" stroke="#303030" stroke-width="2"/><circle cx="14.2" cy="14.4" r="2.5" fill="#44b6ea"/><path d="M14 3L10.6 6.4" stroke="#f0f0f0" stroke-width="2.8" stroke-linecap="round"/><path d="M9.6 7.4L3.4 14" stroke="#f0a0b0" stroke-width="2.4"/><path d="M3.8 13.4L1.6 16.4" stroke="#e8e8e8" stroke-width="1.4" stroke-linecap="round"/></svg>
<div class="sel" style="left:1001px;top:46px"></div>
<svg class="ic" style="left:1003px;top:48px" width="18" height="18" viewBox="0 0 18 18"><path d="M4.6 3.4L4.6 14.6L7.4 12L9.2 16L11.2 15.2L9.4 11.2L13.2 11Z" fill="#ecd8ec"/></svg>
<svg class="ic" style="left:1003px;top:70.7px" width="18" height="18" viewBox="0 0 18 18"><path d="M0.4 3H4.6V11.5H7.6" stroke="#f6dce2" stroke-width="1.6" fill="none"/><path d="M0.4 15.2H9.6V6H17" stroke="#f2647e" stroke-width="2.6" fill="none"/><path d="M0.4 15.2H9.6V6H17" stroke="#f9c4cf" stroke-width="0.7" fill="none" stroke-dasharray="1.4 1"/><path d="M13.2 1.4V17M10.6 11.5H16.8" stroke="#e2e2e2" stroke-width="1.5" fill="none"/></svg>
<svg class="ic" style="left:1003.2px;top:99.8px" width="18" height="18" viewBox="0 0 18 18"><path d="M3 0.8V17.2L17.4 9Z" fill="none" stroke="#e2e2e2" stroke-width="1.3" stroke-linejoin="round"/><path d="M0.6 5.2H3M0.6 12.8H3" stroke="#e2e2e2" stroke-width="1.2"/><path d="M5 5.4H8M6.5 3.9V6.9M5 12.6H8" stroke="#e2e2e2" stroke-width="1"/></svg>
<svg class="ic" style="left:1002.4px;top:122px" width="18" height="18" viewBox="0 0 18 18"><path d="M9 1.6V11" stroke="#e2e2e2" stroke-width="1.4"/><path d="M2 11H16" stroke="#e2e2e2" stroke-width="1.5"/><path d="M4.6 13.8H13.4" stroke="#e2e2e2" stroke-width="1.3"/><path d="M7 16.4H11" stroke="#e2e2e2" stroke-width="1.2"/></svg>
<svg class="ic" style="left:1002.7px;top:144.9px" width="18" height="18" viewBox="0 0 18 18"><path d="M2.2 15.4L15.8 2.6" stroke="#e2e2e2" stroke-width="1.3"/></svg>
<svg class="ic" style="left:1003px;top:167.5px" width="18" height="18" viewBox="0 0 18 18"><path d="M2.6 15L15.4 3" stroke="#3f9fdc" stroke-width="2.8" stroke-linecap="round"/></svg>
<svg class="ic" style="left:1002px;top:190.6px" width="18" height="18" viewBox="0 0 18 18"><path d="M16 1V17.6" stroke="#e2e2e2" stroke-width="1.6"/><path d="M2 3.4H8.4L15.6 11" stroke="#e2e2e2" stroke-width="1.3" fill="none"/><path d="M2 8.4H7.4L15.4 16.6" stroke="#e2e2e2" stroke-width="1.3" fill="none"/><path d="M10 5.2L14 9.4" stroke="#44b6ea" stroke-width="1.4"/></svg>
<svg class="ic" style="left:1002.4px;top:213.7px" width="18" height="18" viewBox="0 0 18 18"><path d="M1 9H9" stroke="#e2e2e2" stroke-width="1.3"/><path d="M6.2 5.2L13.8 12.8M13.8 5.2L6.2 12.8" stroke="#3f9fdc" stroke-width="1.6"/></svg>
<svg class="ic" style="left:1002.4px;top:235.8px" width="18" height="18" viewBox="0 0 18 18"><path d="M1 9H9M9 0.4V18" stroke="#e2e2e2" stroke-width="1.3"/><circle cx="9" cy="9" r="3.5" fill="#3f9fdc"/></svg>
<svg class="ic" style="left:1002.8px;top:258.6px" width="18" height="18" viewBox="0 0 18 18"><text x="9" y="11.4" font-size="10" fill="#e2e2e2" text-anchor="middle" font-family="Liberation Sans,sans-serif">A</text><path d="M0.6 13.8H17.4" stroke="#e2e2e2" stroke-width="1.3"/></svg>
<svg class="ic" style="left:1002.8px;top:281px" width="18" height="18" viewBox="0 0 18 18"><circle cx="4.2" cy="7.2" r="2.4" fill="none" stroke="#e2e2e2" stroke-width="1.3"/><path d="M4.2 9.6V13.8" stroke="#e2e2e2" stroke-width="1.3"/><text x="12.4" y="12.8" font-size="10.4" font-style="italic" fill="#e2e2e2" text-anchor="middle" font-family="Liberation Sans,sans-serif">A</text></svg>
<svg class="ic" style="left:1002.4px;top:304px" width="18" height="18" viewBox="0 0 18 18"><path d="M1.2 3.6H12.2L17 9L12.2 14.4H1.2Z" fill="none" stroke="#e2e2e2" stroke-width="1.3" stroke-linejoin="round"/><text x="6.8" y="12.4" font-size="9" fill="#e2e2e2" text-anchor="middle" font-family="Liberation Sans,sans-serif">A</text></svg>
<svg class="ic" style="left:1003.4px;top:327.2px" width="18" height="18" viewBox="0 0 18 18"><text x="5.2" y="13" font-size="11" fill="#e2e2e2" text-anchor="middle" font-family="Liberation Sans,sans-serif">A</text><path d="M9.4 9.2L13 5.8L17 9.2L13 12.6Z" fill="none" stroke="#e2e2e2" stroke-width="1.4" stroke-linejoin="round"/></svg>
<svg class="ic" style="left:1003.4px;top:350px" width="18" height="18" viewBox="0 0 18 18"><rect x="0.8" y="0.8" width="12.6" height="13" rx="0.8" fill="#dcd8c8"/><path d="M2.4 3.4L4.6 5.4M2.4 5.4L4.6 3.4M6 3.4H12" stroke="#4a4a4a" stroke-width="0.9"/><path d="M3.4 7V10.6L6 8.8Z" fill="none" stroke="#4a4a4a" stroke-width="0.9"/><path d="M2.4 9H3.4" stroke="#4a4a4a" stroke-width="0.8"/><circle cx="12.2" cy="12.8" r="4.4" fill="#f2647e"/><path d="M9.799999999999999 12.8H14.6M12.2 10.4V15.200000000000001" stroke="#fff" stroke-width="1.5"/></svg>
<svg class="ic" style="left:1003.4px;top:372px" width="18" height="18" viewBox="0 0 18 18"><rect x="0.8" y="0.8" width="12.6" height="13" rx="0.8" fill="#dcd8c8"/><text x="4.2" y="8.6" font-size="7.4" fill="#3a3a3a" text-anchor="middle" font-family="Liberation Sans,sans-serif">A</text><path d="M7.4 5.8L10 3.4L12.6 5.8L10 8.2Z" fill="none" stroke="#3a3a3a" stroke-width="1"/><circle cx="12.2" cy="12.8" r="4.4" fill="#f2647e"/><path d="M9.799999999999999 12.8H14.6M12.2 10.4V15.200000000000001" stroke="#fff" stroke-width="1.5"/></svg>
<svg class="ic" style="left:1002.5px;top:401.5px" width="18" height="18" viewBox="0 0 18 18"><path d="M3 2.2H15V4.8H10.5V15.8H7.5V4.8H3Z" fill="#e2e2e2"/></svg>
<svg class="ic" style="left:1003px;top:424.4px" width="18" height="18" viewBox="0 0 18 18"><rect x="2.4" y="2.8" width="13.2" height="12" fill="#8a8a8a" stroke="#e2e2e2" stroke-width="1.3"/><path d="M4.6 6H13.4M4.6 8.8H13.4M4.6 11.6H13.4" stroke="#c8c8c8" stroke-width="1.1"/></svg>
<svg class="ic" style="left:1003px;top:447px" width="18" height="18" viewBox="0 0 18 18"><rect x="2.4" y="2.8" width="13.2" height="12.2" fill="#8a8a8a" stroke="#e2e2e2" stroke-width="1.3"/></svg>
<svg class="ic" style="left:1002.8px;top:469.8px" width="18" height="18" viewBox="0 0 18 18"><circle cx="9" cy="9" r="6.4" fill="#8a8a8a" stroke="#e2e2e2" stroke-width="1.3"/></svg>
</div>
<div id="edge"></div>
</div>
</body></html>
